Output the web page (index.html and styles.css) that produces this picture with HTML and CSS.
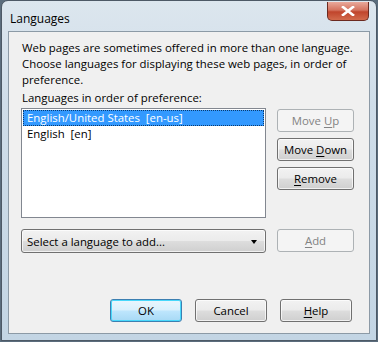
FILE: index.html
```html
<!DOCTYPE html>
<html>
<head>
<meta charset="utf-8">
<link rel="stylesheet" href="styles.css">
</head>
<body>
<div class="window">
  <div class="titlebar">
    <span class="title">Languages</span>
    <div class="close"><svg width="14" height="10" viewBox="0 0 14 10"><path d="M2 1 L12 9 M12 1 L2 9" stroke="#fff" stroke-width="2.6" stroke-linecap="square"/></svg></div>
  </div>
  <div class="client">
    <p class="intro">Web pages are sometimes offered in more than one language. Choose languages for displaying these web pages, in order of preference.</p>
    <div class="label">Languages in order of preference:</div>
    <div class="row">
      <div class="list">
        <div class="item sel">English/United States&nbsp; [en-us]</div>
        <div class="item">English&nbsp; [en]</div>
      </div>
      <div class="side">
        <button class="btn dis">Move <u>U</u>p</button>
        <button class="btn">Move <u>D</u>own</button>
        <button class="btn"><u>R</u>emove</button>
      </div>
    </div>
    <div class="row addrow">
      <div class="combo"><span>Select a language to add...</span><span class="arrow"></span></div>
      <button class="btn dis"><u>A</u>dd</button>
    </div>
    <div class="footer">
      <button class="btn fbtn def">OK</button>
      <button class="btn fbtn">Cancel</button>
      <button class="btn fbtn"><u>H</u>elp</button>
    </div>
  </div>
</div>
</body>
</html>
```
FILE: styles.css
```css
html, body { margin: 0; padding: 0; }
body {
  width: 378px; height: 342px; overflow: hidden;
  background: #5b6d7d;
  font-family: "Open Sans", "Noto Sans", sans-serif;
  font-size: 11.4px;
  color: #000;
}
.window {
  width: 376px; height: 341px;
  margin-left: 1px;
  box-sizing: border-box;
  border: 1px solid #4d5966;
  border-radius: 7px 7px 0 0;
  background: linear-gradient(180deg, #dce6ee 0%, #cfdde9 30%, #c3d5e4 100%);
  padding: 0 6px 6px 6px;
  display: flex; flex-direction: column;
}
.titlebar {
  height: 30px;
  display: flex; align-items: flex-start; justify-content: space-between;
}
.title { margin-top: 9px; margin-left: 2px; font-size: 12px; color: #000; }
.close {
  width: 42px; height: 19px; margin-top: 1px; margin-right: 1px;
  box-sizing: border-box;
  border: 1px solid #6b2a20;
  border-top: none;
  border-radius: 0 0 5px 5px;
  background: linear-gradient(180deg, #e9a99b 0%, #d4735f 45%, #c0452c 55%, #d26a4c 100%);
  display: flex; align-items: center; justify-content: center;
}
.client {
  flex: 1;
  background: #f0f0f0;
  border: 1px solid #8c9aa6;
  box-sizing: border-box;
  padding: 8px 0 0 12px;
  display: flex; flex-direction: column;
}
.intro { margin: 0 0 0 1px; width: 340px; line-height: 16px; }
.label { margin-top: 2px; margin-left: 1px; line-height: 16px; }
.row { display: flex; gap: 11px; align-items: flex-start; }
.list {
  margin-top: 2px;
  width: 245px; height: 110px; box-sizing: border-box;
  background: #fff; border: 1px solid #828790;
  padding: 1px;
}
.item { height: 16px; line-height: 16px; padding-left: 4px; white-space: nowrap; }
.item.sel { background: #3399ff; color: #fff; outline: 1px dotted #0a3a6e; outline-offset: -1px; }
.side { display: flex; flex-direction: column; gap: 6px; margin-top: 3px; }
.btn {
  font: inherit;
  width: 77px; height: 23px; box-sizing: border-box;
  border: 1px solid #707070; border-radius: 3px;
  background: linear-gradient(180deg, #f2f2f2 0%, #ebebeb 48%, #dddddd 52%, #cfcfcf 100%);
  color: #000; padding: 0; margin: 0;
  box-shadow: inset 0 0 0 1px rgba(255,255,255,0.7);
}
.btn.dis {
  border-color: #adb2b5; background: #f4f4f4; color: #838383; box-shadow: none;
}
.addrow { margin-top: 11px; }
.combo {
  width: 245px; height: 24px; box-sizing: border-box;
  border: 1px solid #707070; border-radius: 3px;
  background: linear-gradient(180deg, #f2f2f2 0%, #ebebeb 48%, #dddddd 52%, #cfcfcf 100%);
  box-shadow: inset 0 0 0 1px rgba(255,255,255,0.7);
  display: flex; align-items: center; justify-content: space-between;
  padding: 0 8px 0 5px;
}
.arrow {
  width: 0; height: 0;
  border-left: 3.5px solid transparent; border-right: 3.5px solid transparent;
  border-top: 4px solid #000;
  margin-top: 2px;
}
.footer {
  margin-top: auto; margin-bottom: 11px;
  display: flex; gap: 13px; justify-content: flex-end; padding-right: 17px;
}
.fbtn { width: 72px; }
.fbtn.def {
  border-color: #3c7fb1;
  box-shadow: inset 0 0 0 1px #48d8fb;
  background: linear-gradient(180deg, #eaf6fd 0%, #d9f0fc 48%, #bee6fd 52%, #a7d9f5 100%);
}
u { text-decoration: underline; text-underline-offset: 2px; }
```
